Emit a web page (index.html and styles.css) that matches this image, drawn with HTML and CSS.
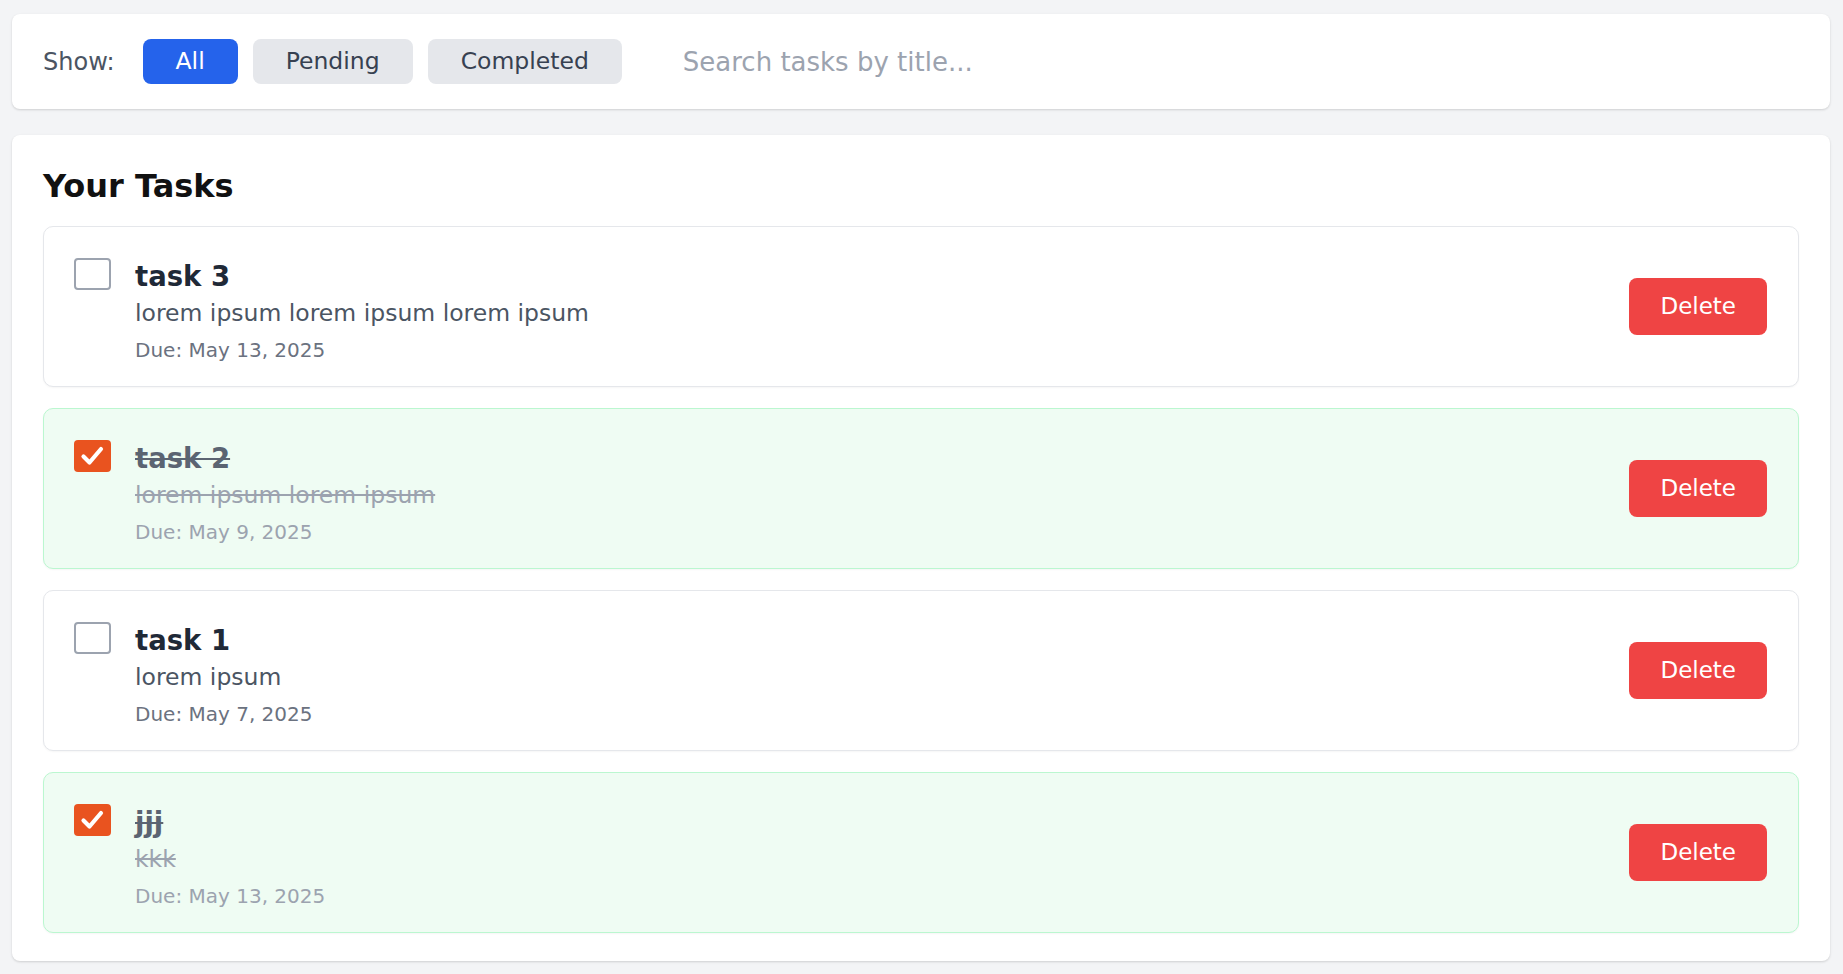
FILE: index.html
```html
<!DOCTYPE html>
<html lang="en">
<head>
<meta charset="utf-8">
<title>Tasks</title>
<link rel="stylesheet" href="styles.css">
</head>
<body>
  <div class="filter-bar">
    <span class="show-label">Show:</span>
    <button class="filter-btn active">All</button>
    <button class="filter-btn">Pending</button>
    <button class="filter-btn">Completed</button>
    <input class="search" type="text" placeholder="Search tasks by title...">
  </div>

  <div class="tasks-card">
    <h2 class="tasks-title">Your Tasks</h2>
    <div class="task-list">
      <div class="task">
        <div class="task-main">
          <span class="checkbox"></span>
          <div class="task-text">
            <div class="task-name">task 3</div>
            <div class="task-desc">lorem ipsum lorem ipsum lorem ipsum</div>
            <div class="task-due">Due: May 13, 2025</div>
          </div>
        </div>
        <button class="delete-btn">Delete</button>
      </div>

      <div class="task done">
        <div class="task-main">
          <span class="checkbox checked"><svg viewBox="0 0 37 32" width="37" height="32"><path d="M9.5 16.5 L15.5 22.5 L27 9" fill="none" stroke="#fff" stroke-width="4.2" stroke-linecap="round" stroke-linejoin="round"/></svg></span>
          <div class="task-text">
            <div class="task-name">task 2</div>
            <div class="task-desc">lorem ipsum lorem ipsum</div>
            <div class="task-due">Due: May 9, 2025</div>
          </div>
        </div>
        <button class="delete-btn">Delete</button>
      </div>

      <div class="task">
        <div class="task-main">
          <span class="checkbox"></span>
          <div class="task-text">
            <div class="task-name">task 1</div>
            <div class="task-desc">lorem ipsum</div>
            <div class="task-due">Due: May 7, 2025</div>
          </div>
        </div>
        <button class="delete-btn">Delete</button>
      </div>

      <div class="task done">
        <div class="task-main">
          <span class="checkbox checked"><svg viewBox="0 0 37 32" width="37" height="32"><path d="M9.5 16.5 L15.5 22.5 L27 9" fill="none" stroke="#fff" stroke-width="4.2" stroke-linecap="round" stroke-linejoin="round"/></svg></span>
          <div class="task-text">
            <div class="task-name">jjj</div>
            <div class="task-desc">kkk</div>
            <div class="task-due">Due: May 13, 2025</div>
          </div>
        </div>
        <button class="delete-btn">Delete</button>
      </div>
    </div>
  </div>
</body>
</html>
```

FILE: styles.css
```css
* { box-sizing: border-box; }

html, body {
  margin: 0;
  background: #f3f4f6;
}

body {
  padding: 14px 13px 13px 12px;
  font-family: "DejaVu Sans", "Liberation Sans", sans-serif;
  color: #1f2937;
}

.filter-bar {
  display: flex;
  align-items: center;
  gap: 15px;
  background: #fff;
  border-radius: 8px;
  box-shadow: 0 1px 3px rgba(0, 0, 0, 0.1), 0 1px 2px rgba(0, 0, 0, 0.06);
  padding: 25px 31px;
}

.show-label {
  font-size: 24px;
  color: #4b5563;
  margin-right: 13px;
}

.filter-btn {
  font-family: inherit;
  font-size: 23.5px;
  height: 45px;
  line-height: 45px;
  padding: 0 33px;
  border: none;
  border-radius: 8px;
  background: #e5e7eb;
  color: #374151;
  cursor: pointer;
}

.filter-btn.active {
  background: #2563eb;
  color: #fff;
}

.search {
  flex: 1;
  margin-left: 30px;
  height: 45px;
  padding: 0 16px;
  border: none;
  outline: none;
  font-family: inherit;
  font-size: 26px;
  color: #374151;
  background: transparent;
}

.search::placeholder {
  color: #9ca3af;
}

.tasks-card {
  margin-top: 26px;
  background: #fff;
  border-radius: 8px;
  box-shadow: 0 1px 3px rgba(0, 0, 0, 0.1), 0 1px 2px rgba(0, 0, 0, 0.06);
  padding: 31px 31px 28px;
}

.tasks-title {
  margin: 0 0 20px;
  font-size: 32px;
  line-height: 40px;
  font-weight: bold;
  color: #111;
}

.task-list {
  display: flex;
  flex-direction: column;
  gap: 21px;
}

.task {
  display: flex;
  align-items: flex-start;
  justify-content: space-between;
  border: 1px solid #e5e7eb;
  border-radius: 10px;
  background: #fff;
  padding: 31px 31px 22px 30px;
  box-shadow: 0 1px 2px rgba(0, 0, 0, 0.04);
}

.task.done {
  background: #effcf3;
  border-color: #bbf7d0;
}

.task-main {
  display: flex;
  align-items: flex-start;
  gap: 24px;
}

.checkbox {
  flex: none;
  width: 37px;
  height: 32px;
  border: 2px solid #9ca3af;
  border-radius: 4px;
  background: #fff;
  display: block;
}

.checkbox.checked {
  border: none;
  background: #e9531f;
}

.checkbox svg {
  display: block;
}

.task-name {
  font-size: 27.5px;
  line-height: 36px;
  font-weight: bold;
  color: #1f2937;
}

.task-desc {
  font-size: 23.5px;
  line-height: 38px;
  color: #4b5563;
}

.task-due {
  margin-top: 4px;
  font-size: 20px;
  line-height: 28px;
  color: #6b7280;
}

.task.done .task-name {
  color: #5b6472;
  text-decoration: line-through;
}

.task.done .task-desc {
  color: #9ca3af;
  text-decoration: line-through;
}

.task.done .task-due {
  color: #9ca3af;
}

.delete-btn {
  margin-top: 20px;
  font-family: inherit;
  font-size: 23px;
  height: 57px;
  line-height: 57px;
  padding: 0 31px;
  border: none;
  border-radius: 8px;
  background: #ef4444;
  color: #fff;
  cursor: pointer;
}
```
